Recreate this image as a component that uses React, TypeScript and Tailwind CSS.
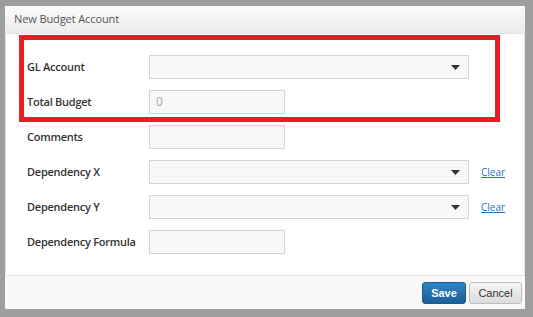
import React from "react";

const LABEL = "font-['Open_Sans',sans-serif]";

function Caret() {
  return (
    <svg width="9" height="5" viewBox="0 0 9 5" className="shrink-0">
      <path d="M0 0 H9 L4.5 5 Z" fill="#333" />
    </svg>
  );
}

function Select() {
  return (
    <div className="flex h-[24px] w-[320px] items-center justify-end border border-[#d4d4d4] bg-[#f8f8f8] pr-[8px]">
      <Caret />
    </div>
  );
}

function TextBox({ placeholder }: { placeholder?: string }) {
  return (
    <div className="flex h-[24px] w-[136px] items-center border border-[#d4d4d4] bg-[#f8f8f8] pl-[6px] text-[12px] text-[#aaa]">
      {placeholder}
    </div>
  );
}

function Row({ label, children }: { label: string; children: React.ReactNode }) {
  return (
    <div className="flex h-[24px] items-center">
      <div className={`w-[122px] text-[11px] font-semibold tracking-[-0.25px] text-[#333] ${LABEL}`}>{label}</div>
      {children}
    </div>
  );
}

function Clear() {
  return (
    <a className="ml-[12px] text-[10px] text-[#2a6fbf] underline font-['Open_Sans',sans-serif]">Clear</a>
  );
}

export default function App() {
  return (
    <div className="h-[317px] w-[533px] bg-[#9e9e9e] pl-[5px] pt-[6px]">
      <div className="relative flex h-[303px] w-[520px] flex-col bg-white">
        <div className="flex h-[28px] items-center border-b border-[#e2e2e2] bg-gradient-to-b from-[#fbfbfb] to-[#ececec] pl-[9px]">
          <span className="text-[11px] tracking-[-0.1px] text-[#555] font-['Open_Sans',sans-serif]">New Budget Account</span>
        </div>
        <div className="flex flex-1 flex-col gap-[11px] border-x border-b border-[#e4e4e4] pl-[21px] pt-[21px]">
          <Row label="GL Account">
            <Select />
          </Row>
          <Row label="Total Budget">
            <TextBox placeholder="0" />
          </Row>
          <Row label="Comments">
            <TextBox />
          </Row>
          <Row label="Dependency X">
            <Select />
            <Clear />
          </Row>
          <Row label="Dependency Y">
            <Select />
            <Clear />
          </Row>
          <Row label="Dependency Formula">
            <TextBox />
          </Row>
        </div>
        <div className="flex h-[33px] items-start justify-end gap-[3px] bg-[#f9f9f9] pr-[3px] pt-[6px]">
          <button className="h-[22px] w-[44px] rounded-[3px] border border-[#1a5a8c] bg-gradient-to-b from-[#2f86c6] to-[#1b5f96] text-[11px] font-bold text-white font-['Liberation_Sans',sans-serif]">
            Save
          </button>
          <button className="h-[22px] w-[53px] rounded-[3px] border border-[#bdbdbd] bg-gradient-to-b from-[#f6f6f6] to-[#dcdcdc] text-[11px] text-[#333] font-['Liberation_Sans',sans-serif]">
            Cancel
          </button>
        </div>
        <div className="pointer-events-none absolute left-[14px] top-[29px] h-[87px] w-[481px] border-[5px] border-[#ec1c24]" />
      </div>
    </div>
  );
}
